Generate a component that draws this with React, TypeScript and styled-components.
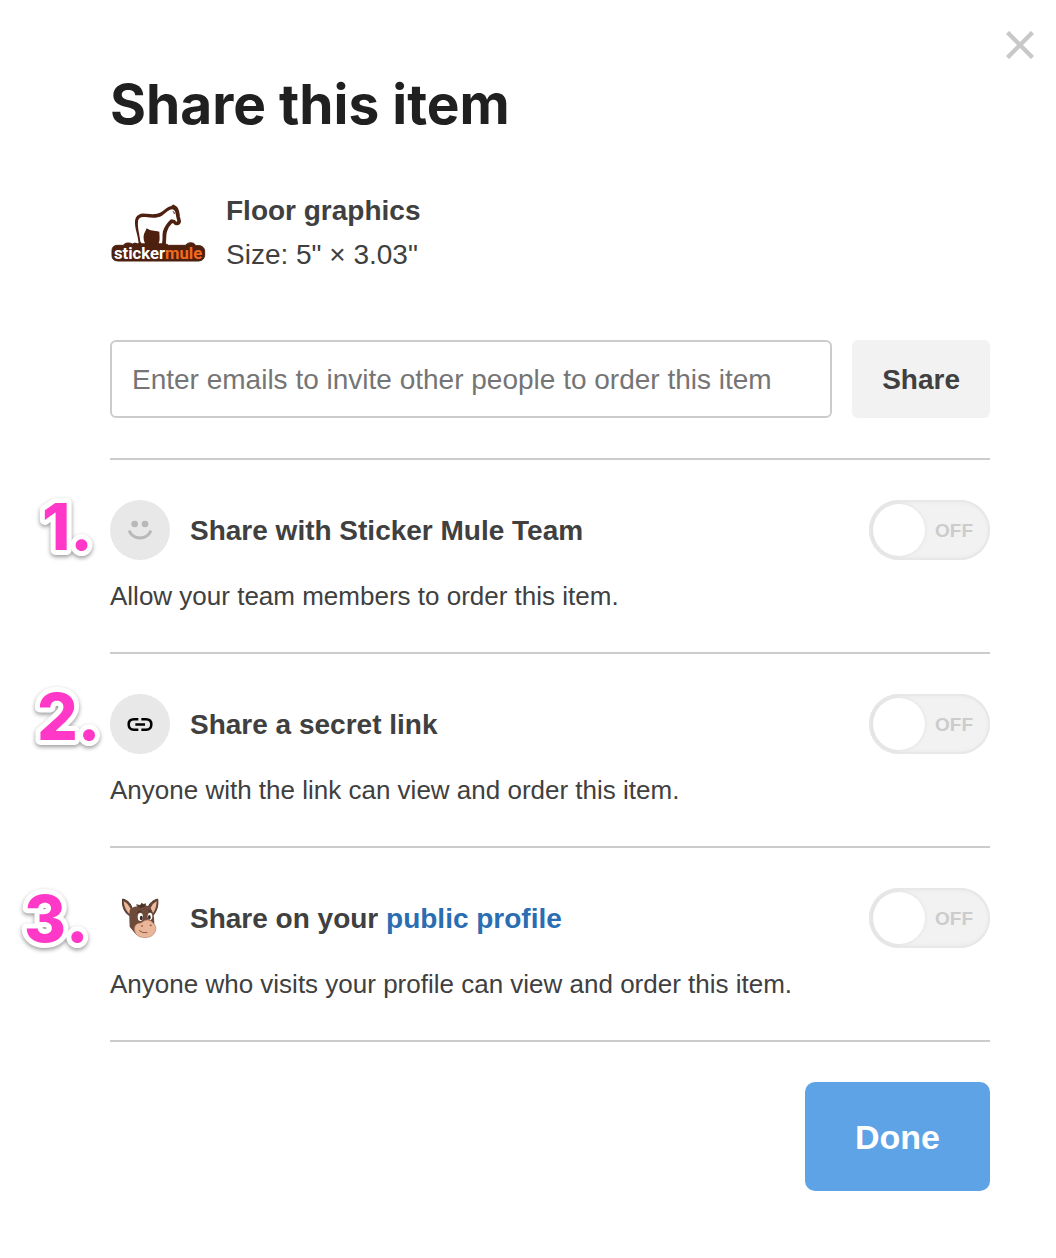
import React, { useId, useState } from "react";
import type { ReactNode } from "react";
import styled, { createGlobalStyle } from "styled-components";

const sans = `"Helvetica Neue", "Liberation Sans", Arial, sans-serif`;

const GlobalStyle = createGlobalStyle`
  *, *::before, *::after { box-sizing: border-box; }
  body {
    margin: 0;
    background: #fff;
    color: #404040;
    font-family: ${sans};
    font-size: 28px;
    line-height: 44px;
  }
  button, input { font: inherit; color: inherit; }
`;

const Dialog = styled.main`
  position: relative;
  padding: 72px 66px 66px 110px;
`;

const CloseButton = styled.button`
  position: absolute;
  top: 25px;
  right: 16px;
  display: grid;
  place-items: center;
  width: 40px;
  height: 40px;
  padding: 0;
  border: 0;
  background: none;
  cursor: pointer;
`;

const Title = styled.h1`
  margin: 0;
  color: #202020;
  font-family: Inter, sans-serif;
  font-size: 55px;
  font-weight: 700;
  line-height: 64px;
`;

const Product = styled.section`
  display: flex;
  align-items: center;
  gap: 20px;
  margin-top: 53px;
`;

const ProductName = styled.h2`
  margin: 0;
  font-size: 28px;
  line-height: 44px;
`;

const ProductSize = styled.p`
  margin: 0;
`;

const InviteForm = styled.form`
  display: flex;
  gap: 20px;
  margin-top: 63px;
  padding-bottom: 40px;
  border-bottom: 2px solid #ccc;
`;

const EmailInput = styled.input`
  flex: 1;
  min-width: 0;
  height: 78px;
  padding: 2px 20px 0;
  border: 2px solid #ccc;
  border-radius: 6px;
  background: #fff;

  &::placeholder { color: #757575; opacity: 1; }
`;

const ShareButton = styled.button`
  padding: 2px 30px 0;
  border: 0;
  border-radius: 6px;
  background: #f2f2f2;
  font-weight: 700;
  cursor: pointer;
`;

const Option = styled.section`
  position: relative;
  padding: 40px 0 34px;
  border-bottom: 2px solid #ccc;
`;

const OptionHeader = styled.div`
  display: flex;
  align-items: center;
  gap: 20px;
`;

const OptionTitle = styled.h2`
  flex: 1;
  margin: 0;
  padding-top: 2px;
  font-size: 28px;
  line-height: 44px;
`;

const OptionText = styled.p`
  margin: 14px 0 0;
  font-size: 26px;
  line-height: 44px;
`;

const ProfileLink = styled.a`
  color: #2a6db2;
  text-decoration: none;
`;

const IconCircle = styled.span<{ $plain?: boolean }>`
  display: grid;
  place-items: center;
  width: 60px;
  height: 60px;
  border-radius: 50%;
  background: ${(p) => (p.$plain ? "none" : "#e8e8e8")};
`;

const Marker = styled.svg<{ $top: number; $left: number }>`
  position: absolute;
  top: ${(p) => p.$top}px;
  left: ${(p) => p.$left}px;
  overflow: visible;
  filter: drop-shadow(0 2px 2px rgba(0, 0, 0, 0.4));

  text {
    fill: #ff38c8;
    stroke: #fff;
    stroke-width: 10px;
    stroke-linejoin: round;
    paint-order: stroke fill;
    font-family: Inter, sans-serif;
    font-size: 64px;
    font-weight: 800;
    font-kerning: none;
  }
`;

const Switch = styled.label`
  position: relative;
  display: flex;
  align-items: center;
  justify-content: flex-end;
  width: 121px;
  height: 60px;
  padding: 2px 17px 0;
  border-radius: 30px;
  background: #f2f2f2;
  box-shadow: inset 0 0 0 2px #e8e8e8, inset 2px 0 6px #dedede;
  color: #ccc;
  font-size: 19px;
  font-weight: 700;
  cursor: pointer;

  &:has(input:checked) {
    justify-content: flex-start;
    background: #5ea3e6;
    color: #fff;
  }
`;

const SwitchInput = styled.input`
  position: absolute;
  inset: 0;
  width: 100%;
  height: 100%;
  margin: 0;
  opacity: 0;
  cursor: pointer;
`;

const Knob = styled.span`
  position: absolute;
  top: 4px;
  left: 4px;
  width: 52px;
  height: 52px;
  border-radius: 50%;
  background: #fff;
  box-shadow: 0 0 4px rgba(0, 0, 0, 0.08);

  input:checked + & { left: auto; right: 4px; }
`;

const Actions = styled.div`
  display: flex;
  justify-content: flex-end;
  margin-top: 40px;
`;

const DoneButton = styled.button`
  height: 109px;
  padding: 0 50px;
  border: 0;
  border-radius: 10px;
  background: #5ea3e6;
  color: #fff;
  font-size: 34px;
  font-weight: 700;
  cursor: pointer;
`;

function CloseIcon() {
  return (
    <svg width="28" height="28" viewBox="0 0 28 28" aria-hidden="true">
      <path d="M1.500 1.500 26.500 26.500M26.500 1.500 1.500 26.500" stroke="#c8c8c8" strokeWidth="4.4" />
    </svg>
  );
}

function StickerMuleLogo() {
  const horse =
    "M121 160C120 132 108 112 110 91C111 76 121 72 136 73C153 75 169 78 184 69C196 62 204 51 216 50L220 46L225 49C235 56 233 68 235 78L238 91C236 100 227 100 224 93L215 91C206 99 199 110 196 121C192 132 195 145 192 161Z";
  return (
    <svg width="96" height="64" viewBox="30 30 288 192" role="img" aria-label="Sticker Mule">
      <path d={horse} fill="#4d2010" stroke="#4d2010" strokeWidth="10" strokeLinejoin="round" />
      <path
        d="M50 163H70Q74 156 82 156Q90 155 97 159Q104 154 112 158H196L206 163H256Q262 155 272 155Q284 155 287 164H300Q314 168 314 181V193Q312 209 296 210H54Q36 209 36 194V179Q36 165 50 163Z"
        fill="#4d2010"
        stroke="#4d2010"
        strokeWidth="3"
      />
      <path
        d="M121 152C119 130 112 109 114 92C115 80 123 77 137 78C154 80 170 83 186 74C198 66 205 56 217 55C227 57 227 69 229 79L232 90C230 94 228 92 225 87L213 85C201 96 193 107 189 121C186 132 189 143 186 157H176C181 147 178 134 178 122C162 119 150 120 140 112C137 120 132 126 131 134C130 144 132 151 135 157H125Z"
        fill="#fff"
      />
      <path d="M218 61Q224 63 223 69" fill="none" stroke="#4d2010" strokeWidth="3" />
      <text x="42" y="203" fontFamily="Roboto, sans-serif" fontSize="50" fontWeight="700" fill="#fff">
        sticker
        <tspan fill="#f26a1b">mule</tspan>
      </text>
    </svg>
  );
}

function SmileIcon() {
  return (
    <svg width="60" height="60" viewBox="0 0 180 180" aria-hidden="true">
      <circle cx="74" cy="72" r="10" fill="#b8b8b8" />
      <circle cx="105" cy="72" r="10" fill="#b8b8b8" />
      <path d="M57 92Q67 114 90 114Q113 114 123 92" fill="none" stroke="#b8b8b8" strokeWidth="8.5" />
    </svg>
  );
}

function LinkIcon() {
  return (
    <svg width="60" height="60" viewBox="0 0 180 180" fill="none" stroke="#000" strokeWidth="7.5" aria-hidden="true">
      <path d="M85 76H72Q56 76 56 91.500T72 107H85M94 76H108Q124 76 124 91.500T108 107H94M76 91.500H105" />
    </svg>
  );
}

function DonkeyIcon() {
  return (
    <svg width="60" height="60" viewBox="0 -6 180 180" aria-hidden="true">
      <path d="M38 27C49 29 61 38 65 51L63 79C47 73 34 52 38 27Z" fill="#64473a" stroke="#4f392f" strokeWidth="3" />
      <path d="M41 34Q54 40 62 58L61 74Q43 60 41 34Z" fill="#f1b99b" />
      <path d="M143 27C131 30 119 38 115 50L127 78C140 66 146 46 143 27Z" fill="#64473a" stroke="#4f392f" strokeWidth="3" />
      <path d="M140 34Q128 40 122 53L128 71Q139 57 140 34Z" fill="#f1b99b" />
      <path d="M59 61Q65 51 82 49L78 43L91 45L95 38L100 42L108 40L107 46L115 49Q129 60 132 82L133 104L116 138Q94 146 76 131L59 110Q57 82 59 61Z" fill="#6d4a3a" />
      <path d="M78 44L90 47L95 40L99 44L107 42L104 50L91 54Z" fill="#493328" />
      <ellipse cx="91" cy="81" rx="8" ry="12" fill="#fff" />
      <ellipse cx="120" cy="79" rx="7" ry="11" fill="#fff" />
      <ellipse cx="94" cy="84" rx="4.500" ry="7" fill="#3e2a22" />
      <ellipse cx="118" cy="82" rx="4" ry="7" fill="#3e2a22" />
      <path d="M81 69Q85 62 94 64M114 63Q121 61 125 67" fill="none" stroke="#493328" strokeWidth="3" />
      <path d="M74 121C72 108 79 101 89 100C97 99 101 90 112 90C124 90 128 100 134 104C143 115 135 139 113 142C91 145 76 137 74 121Z" fill="#e9b699" stroke="#bb8067" strokeWidth="2" />
      <ellipse cx="96" cy="108" rx="3.500" ry="2.500" fill="#8d5b47" />
      <ellipse cx="122" cy="106" rx="3.500" ry="2.500" fill="#8d5b47" />
      <path d="M88 122Q98 131 111 128" fill="none" stroke="#8d5b47" strokeWidth="3" strokeLinecap="round" />
    </svg>
  );
}

function Toggle({ labelledBy }: { labelledBy: string }) {
  const [on, setOn] = useState(false);
  return (
    <Switch>
      <SwitchInput
        type="checkbox"
        aria-labelledby={labelledBy}
        checked={on}
        onChange={(e) => setOn(e.target.checked)}
      />
      <Knob />
      {on ? "ON" : "OFF"}
    </Switch>
  );
}

interface ShareOptionProps {
  marker: string;
  markerTop: number;
  markerLeft: number;
  icon: ReactNode;
  plainIcon?: boolean;
  title: ReactNode;
  children: ReactNode;
}

function ShareOption({ marker, markerTop, markerLeft, icon, plainIcon, title, children }: ShareOptionProps) {
  const id = useId();
  return (
    <Option>
      <Marker $top={markerTop} $left={markerLeft} width="64" height="64">
        <text x="0" y="55">{marker}</text>
      </Marker>
      <OptionHeader>
        <IconCircle $plain={plainIcon}>{icon}</IconCircle>
        <OptionTitle id={id}>{title}</OptionTitle>
        <Toggle labelledBy={id} />
      </OptionHeader>
      <OptionText>{children}</OptionText>
    </Option>
  );
}

export default function App() {
  return (
    <>
      <GlobalStyle />
      <Dialog>
        <CloseButton type="button" aria-label="Close">
          <CloseIcon />
        </CloseButton>
        <Title>Share this item</Title>
        <Product>
          <StickerMuleLogo />
          <div>
            <ProductName>Floor graphics</ProductName>
            <ProductSize>Size: 5" × 3.03"</ProductSize>
          </div>
        </Product>
        <InviteForm onSubmit={(e) => e.preventDefault()}>
          <EmailInput
            type="text"
            aria-label="Emails"
            placeholder="Enter emails to invite other people to order this item"
          />
          <ShareButton type="submit">Share</ShareButton>
        </InviteForm>
        <ShareOption marker="1." markerTop={35} markerLeft={-68} icon={<SmileIcon />} title="Share with Sticker Mule Team">
          Allow your team members to order this item.
        </ShareOption>
        <ShareOption marker="2." markerTop={31} markerLeft={-73} icon={<LinkIcon />} title="Share a secret link">
          Anyone with the link can view and order this item.
        </ShareOption>
        <ShareOption
          marker="3."
          markerTop={39}
          markerLeft={-86}
          icon={<DonkeyIcon />}
          plainIcon
          title={<>Share on your <ProfileLink href="#profile">public profile</ProfileLink></>}
        >
          Anyone who visits your profile can view and order this item.
        </ShareOption>
        <Actions>
          <DoneButton type="button">Done</DoneButton>
        </Actions>
      </Dialog>
    </>
  );
}
